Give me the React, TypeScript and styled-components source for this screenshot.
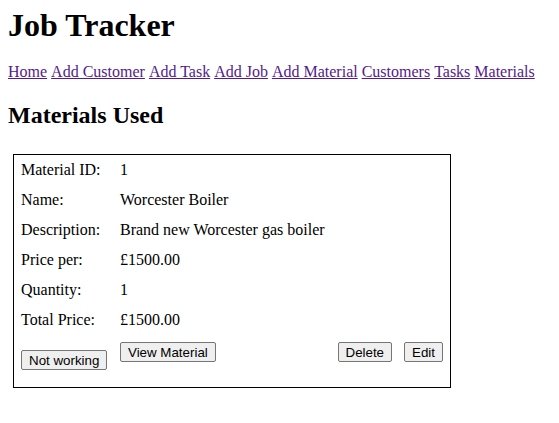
import React, { FC } from 'react'
import styled, { createGlobalStyle } from 'styled-components'

const GlobalStyle = createGlobalStyle`
    body {
        margin: 8px;
        font-family: "Liberation Serif", "Times New Roman", serif;
        color: #000;
        background: #fff;
    }
`

const Title = styled.h1`
    font-size: 32px;
    font-weight: bold;
    margin: -1px 0 19px;
`

const Nav = styled.nav`
    font-size: 16px;
    margin-bottom: 21px;
`

const NavLink = styled.a`
    color: #551a8b;
    text-decoration: underline;
    margin-right: 4px;
`

const Heading = styled.h2`
    font-size: 24px;
    font-weight: bold;
    margin: 0 0 25px;
`

const Card = styled.div`
    box-sizing: border-box;
    width: 438px;
    margin-left: 5px;
    border: 1px solid #000;
    padding: 0 7px 17px;
    font-size: 16px;
`

const Row = styled.div`
    display: grid;
    grid-template-columns: 99px 1fr;
    height: 30px;
    align-items: center;
`

const Actions = styled.div`
    display: grid;
    grid-template-columns: 99px auto 1fr auto auto;
    align-items: start;
    margin-top: 7px;
`

const Button = styled.button<{ $offset?: number }>`
    justify-self: start;
    height: 20px;
    font-family: Arial, "Liberation Sans", sans-serif;
    font-size: 13.33px;
    padding: 1px 7px;
    background: #efefef;
    border: 1px solid #767676;
    border-radius: 2px;
    color: #000;
    margin-top: ${p => p.$offset ?? 0}px;
`

const Spacer = styled.div``

const EditButton = styled(Button)`
    margin-left: 12px;
`

interface Material {
    id: number
    name: string
    description: string
    price: string
    quantity: number
    total: string
}

const material: Material = {
    id: 1,
    name: 'Worcester Boiler',
    description: 'Brand new Worcester gas boiler',
    price: '£1500.00',
    quantity: 1,
    total: '£1500.00',
}

const links = ['Home', 'Add Customer', 'Add Task', 'Add Job', 'Add Material', 'Customers', 'Tasks', 'Materials']

const App: FC = () => {
    const fields: [string, string | number][] = [
        ['Material ID:', material.id],
        ['Name:', material.name],
        ['Description:', material.description],
        ['Price per:', material.price],
        ['Quantity:', material.quantity],
        ['Total Price:', material.total],
    ]

    return (
        <>
            <GlobalStyle />
            <Title>Job Tracker</Title>
            <Nav>
                {links.map(l => <NavLink key={l} href="#">{l}</NavLink>)}
            </Nav>
            <Heading>Materials Used</Heading>
            <Card>
                {fields.map(([label, value]) => (
                    <Row key={label}>
                        <span>{label}</span>
                        <span>{value}</span>
                    </Row>
                ))}
                <Actions>
                    <Button $offset={8}>Not working</Button>
                    <Button>View Material</Button>
                    <Spacer />
                    <Button>Delete</Button>
                    <EditButton>Edit</EditButton>
                </Actions>
            </Card>
        </>
    )
}

export default App
